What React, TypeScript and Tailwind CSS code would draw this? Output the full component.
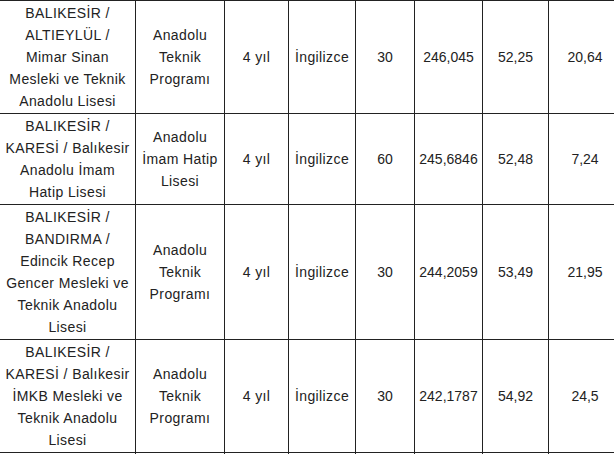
import React from "react";

type Row = {
    school: string[];
    type: string[];
    years: string;
    lang: string;
    quota: string;
    score: string;
    pct: string;
    pct2: string;
};

const rows: Row[] = [
    {
        school: ["BALIKESİR /", "ALTIEYLÜL /", "Mimar Sinan", "Mesleki ve Teknik", "Anadolu Lisesi"],
        type: ["Anadolu", "Teknik", "Programı"],
        years: "4 yıl",
        lang: "İngilizce",
        quota: "30",
        score: "246,045",
        pct: "52,25",
        pct2: "20,64",
    },
    {
        school: ["BALIKESİR /", "KARESİ / Balıkesir", "Anadolu İmam", "Hatip Lisesi"],
        type: ["Anadolu", "İmam Hatip", "Lisesi"],
        years: "4 yıl",
        lang: "İngilizce",
        quota: "60",
        score: "245,6846",
        pct: "52,48",
        pct2: "7,24",
    },
    {
        school: ["BALIKESİR /", "BANDIRMA /", "Edincik Recep", "Gencer Mesleki ve", "Teknik Anadolu", "Lisesi"],
        type: ["Anadolu", "Teknik", "Programı"],
        years: "4 yıl",
        lang: "İngilizce",
        quota: "30",
        score: "244,2059",
        pct: "53,49",
        pct2: "21,95",
    },
    {
        school: ["BALIKESİR /", "KARESİ / Balıkesir", "İMKB Mesleki ve", "Teknik Anadolu", "Lisesi"],
        type: ["Anadolu", "Teknik", "Programı"],
        years: "4 yıl",
        lang: "İngilizce",
        quota: "30",
        score: "242,1787",
        pct: "54,92",
        pct2: "24,5",
    },
];

const cell = "border border-[#222] px-[2px] py-[1px] text-center align-middle whitespace-nowrap";
const text = "tracking-[0.4px]";

const Lines = ({ lines }: { lines: string[] }) => (
    <>
        {lines.map((l, i) => (
            <div key={i}>{l}</div>
        ))}
    </>
);

export default function App() {
    return (
        <div
            className="w-[614px] h-[454px] overflow-hidden bg-white text-[14px] leading-[22px] text-[#222]"
            style={{ fontFamily: '"Liberation Sans", Arial, sans-serif' }}
        >
            <table className="table-fixed border-collapse ml-[-1px] w-[622px]">
                <colgroup>
                    <col className="w-[136px]" />
                    <col className="w-[89px]" />
                    <col className="w-[64px]" />
                    <col className="w-[67px]" />
                    <col className="w-[59px]" />
                    <col className="w-[68px]" />
                    <col className="w-[66px]" />
                    <col className="w-[73px]" />
                </colgroup>
                <tbody>
                    {rows.map((r, i) => (
                        <tr key={i}>
                            <td className={`${cell} ${text}`}><Lines lines={r.school} /></td>
                            <td className={`${cell} ${text}`}><Lines lines={r.type} /></td>
                            <td className={`${cell} ${text}`}>{r.years}</td>
                            <td className={`${cell} ${text}`}>{r.lang}</td>
                            <td className={cell}>{r.quota}</td>
                            <td className={`${cell} px-0`}>{r.score}</td>
                            <td className={cell}>{r.pct}</td>
                            <td className={cell}>{r.pct2}</td>
                        </tr>
                    ))}
                    <tr className="h-[44px]">
                        {Array.from({ length: 8 }).map((_, i) => (
                            <td key={i} className={cell}></td>
                        ))}
                    </tr>
                </tbody>
            </table>
        </div>
    );
}
